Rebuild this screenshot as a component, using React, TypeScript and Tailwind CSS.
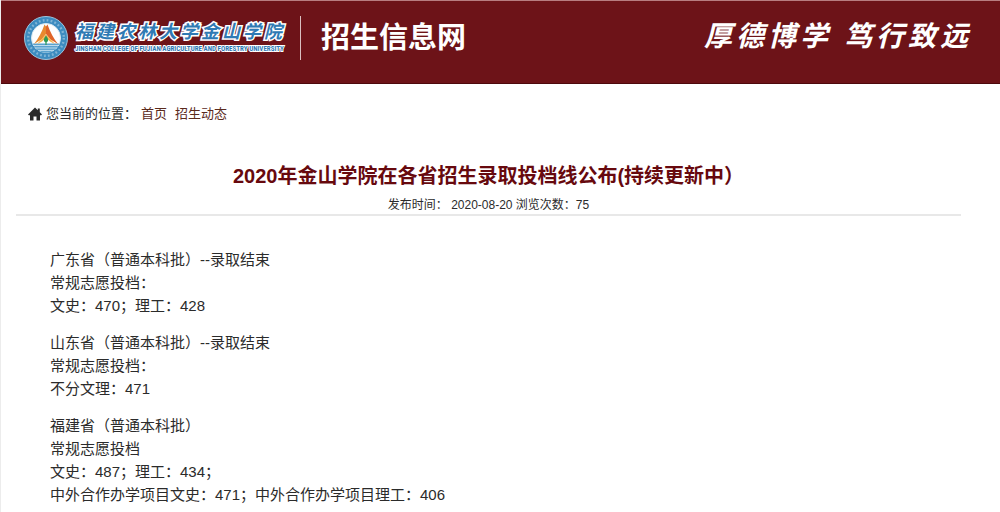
const sections = [
  ["广东省（普通本科批）--录取结束", "常规志愿投档：", "文史：470；理工：428"],
  ["山东省（普通本科批）--录取结束", "常规志愿投档：", "不分文理：471"],
  [
    "福建省（普通本科批）",
    "常规志愿投档",
    "文史：487；理工：434；",
    "中外合作办学项目文史：471；中外合作办学项目理工：406",
  ],
];

function Emblem() {
  return (
    <svg viewBox="0 0 44 44" className="size-11 shrink-0" aria-hidden="true">
      <circle cx="22" cy="22" r="21.5" fill="#3d8cc0" stroke="#9cc6de" strokeWidth="1" />
      <circle cx="22" cy="22" r="17.8" fill="none" stroke="#c3deec" strokeWidth="2.4" strokeDasharray="1.800 2.200" opacity="0.5" />
      <circle cx="22" cy="22" r="14.5" fill="#fdfefe" stroke="#d9eaf3" strokeWidth="1" />
      <path d="M8.500 27.500 A14.500 14.500 0 0 0 35.500 27.500 Z" fill="#5ba3cf" />
      <path d="M9 29.500 H35 M11 32 H33 M14 34.400 H30" stroke="#d7ebf6" strokeWidth="0.8" />
      <path d="M20.500 8.500 L22 10.500 V18 L17.500 23.500 L10 28 Q16.500 20 20.500 8.500 Z" fill="#e8892f" />
      <path d="M23.500 8.500 L22 10.500 V18 L26.500 23.500 L34 28 Q27.500 20 23.500 8.500 Z" fill="#df6428" />
      <path d="M13 28 L22 18.500 L31 28 L26 25.500 L22 22 L18 25.500 Z" fill="#f3b34c" />
      <path d="M22 19.500 Q26 24.500 22.600 26.500 V29 H21.400 V26.500 Q18 24.500 22 19.500 Z" fill="#2e9a57" />
    </svg>
  );
}

function Spread({ text }: { text: string }) {
  return (
    <>
      {Array.from(text).map((char, i) => (
        <span key={i}>{char}</span>
      ))}
    </>
  );
}

function Header() {
  return (
    <header className="flex h-[84px] items-start justify-between border-t border-b border-t-[#b87d80] border-b-[#4d090d] bg-[#6d1318] pr-8 pl-[23px] text-white">
      <div className="flex items-center pt-[15px]">
        <Emblem />
        <div className="ml-[7px] flex w-[211px] flex-col text-[#2f7ab4] [paint-order:stroke_fill]">
          <div className="flex justify-between pr-1 text-[18px] leading-[22px] font-bold italic [-webkit-text-stroke:3px_white]">
            <Spread text="福建农林大学金山学院" />
          </div>
          <div className="font-['Roboto_Condensed','Roboto',sans-serif] text-[7px] leading-[12px] font-bold whitespace-nowrap [-webkit-text-stroke:2px_white]">
            JINSHAN COLLEGE OF FUJIAN AGRICULTURE AND FORESTRY UNIVERSITY
          </div>
        </div>
        <div className="ml-3.5 h-11 w-px bg-[#d9bfc0]" />
        <div className="ml-5 text-[29px] leading-[44px] font-bold whitespace-nowrap">招生信息网</div>
      </div>
      <div className="flex gap-4 pt-4 text-[28px] leading-[40px] font-bold italic">
        <div className="flex gap-1">
          <Spread text="厚德博学" />
        </div>
        <div className="flex gap-1">
          <Spread text="笃行致远" />
        </div>
      </div>
    </header>
  );
}

export default function App() {
  return (
    <div className="min-h-screen border-l border-[#ececec] bg-white font-['Liberation_Sans','Noto_Sans_CJK_SC',sans-serif] text-[#2b2b2b]">
      <Header />
      <nav className="flex items-center pt-5 pl-[27px] text-[13px] leading-5" aria-label="当前位置">
        <svg viewBox="0 0 14 14" className="mr-1 size-3.5" fill="#2b2b2b" aria-hidden="true">
          <path d="M7 0.500 L9.800 3.300 V1.500 H11.800 V5.300 L14 7.500 L13.200 8.300 H12 V13.500 H8.500 V9.500 H5.500 V13.500 H2 V8.300 H0.800 L0 7.500 Z" />
        </svg>
        <span>您当前的位置：</span>
        <a href="#home" className="ml-1 text-[#5a2a1c]">首页</a>
        <a href="#news" className="ml-2 text-[#5a2a1c]">招生动态</a>
      </nav>
      <main className="mr-[39px] ml-[15px] pt-[37px]">
        <div className="border-b-2 border-[#e8e8e8] text-center">
          <h1 className="text-[20px] leading-[30px] font-bold text-[#67090e]">
            2020年金山学院在各省招生录取投档线公布(持续更新中）
          </h1>
          <p className="pt-[5px] text-[12px] leading-[18px]">发布时间： 2020-08-20 浏览次数：75</p>
        </div>
        <article className="flex flex-col gap-3.5 pt-8 pl-[34px] text-[15px] leading-[23px]">
          {sections.map((lines) => (
            <section key={lines[0]}>
              {lines.map((line) => (
                <p key={line}>{line}</p>
              ))}
            </section>
          ))}
        </article>
      </main>
    </div>
  );
}
